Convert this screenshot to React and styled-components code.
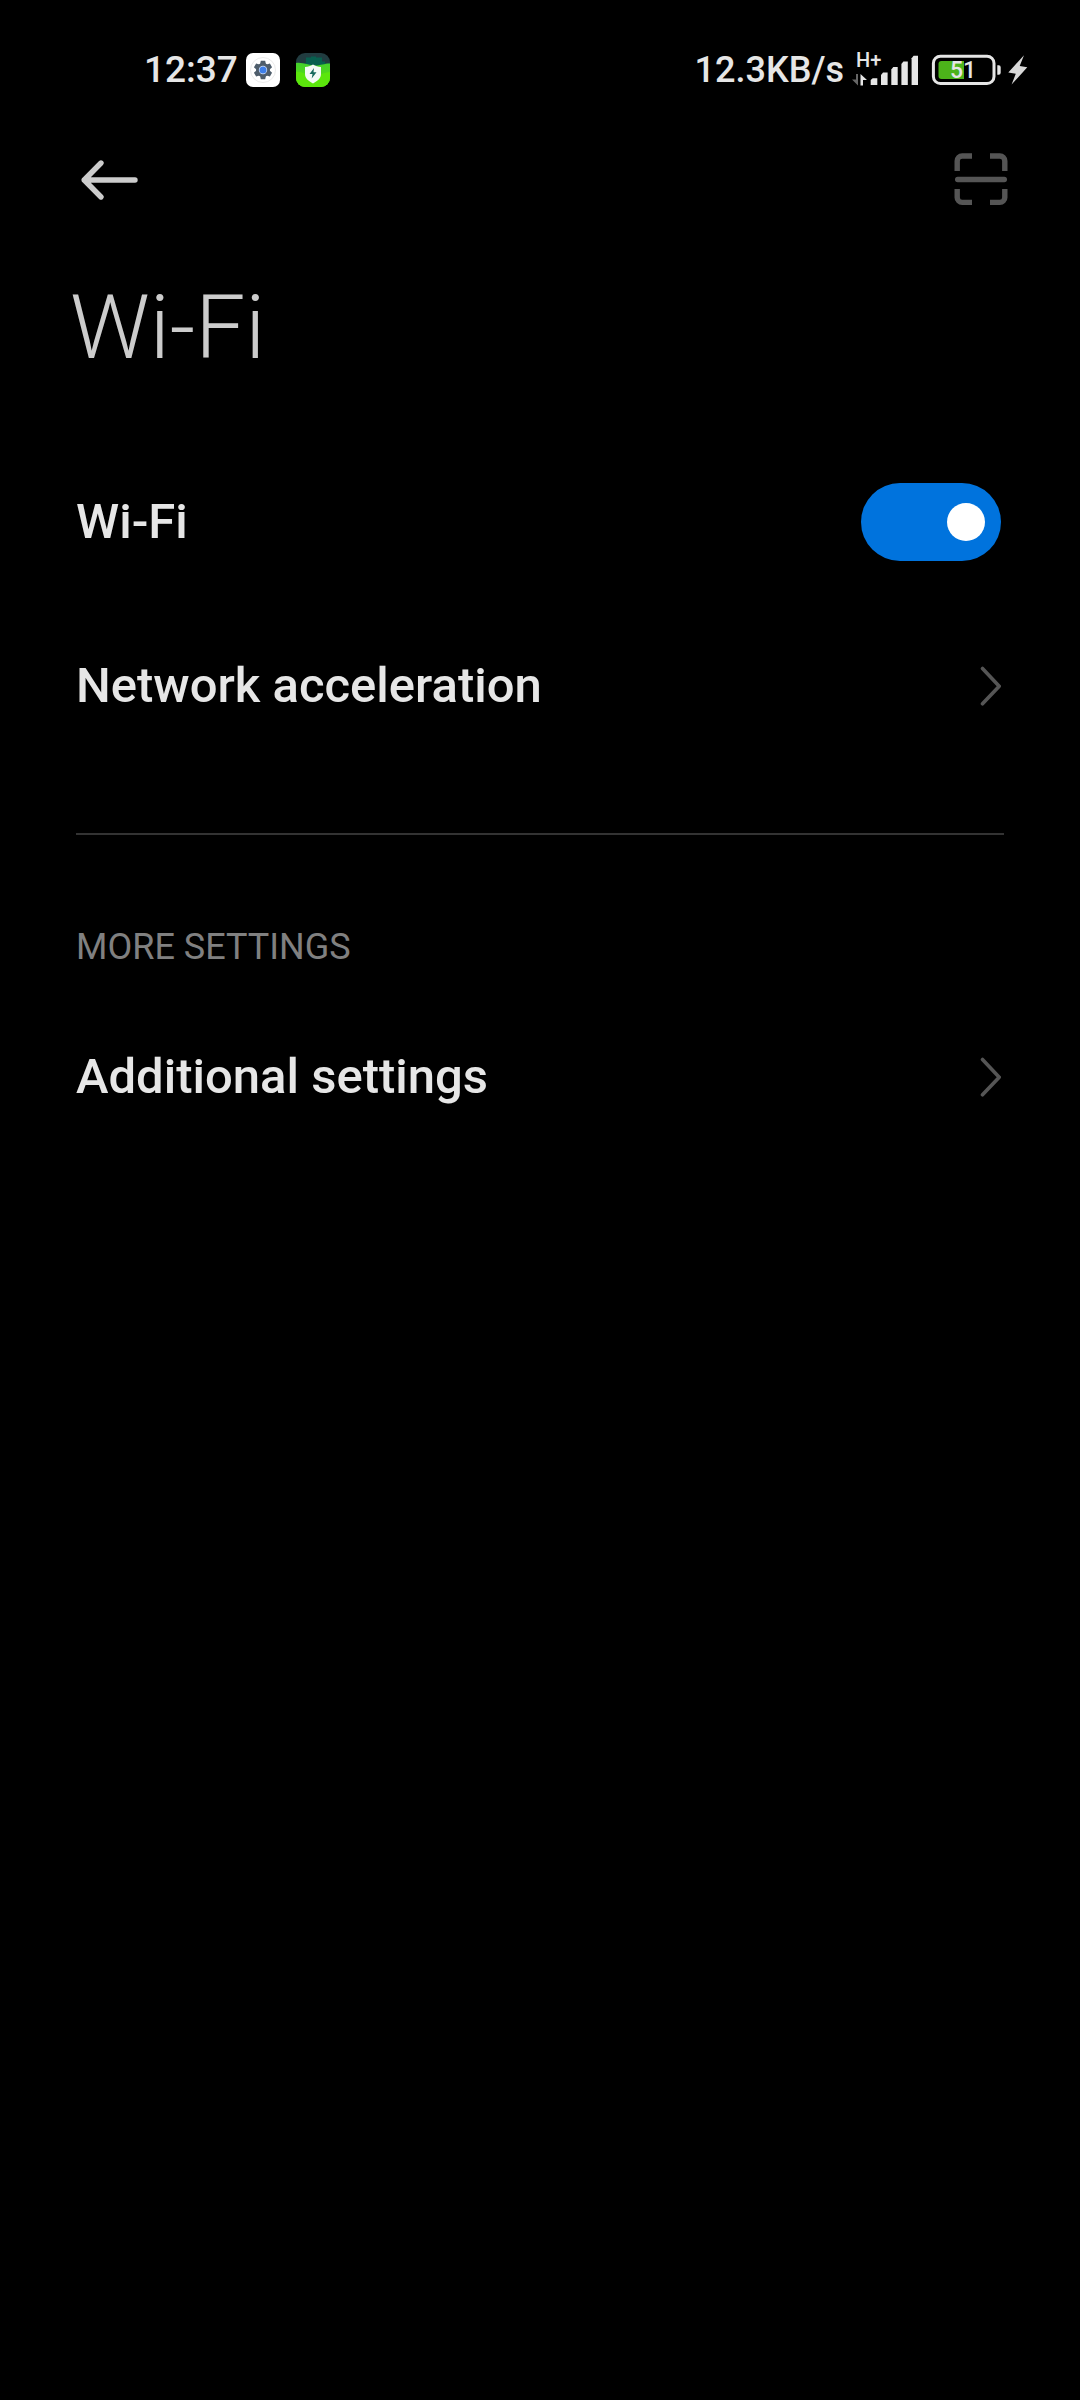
import { useState } from "react";
import styled, { createGlobalStyle } from "styled-components";

const GlobalStyle = createGlobalStyle`
  * {
    box-sizing: border-box;
  }
  body {
    margin: 0;
    background: #000;
    color: #e6e6e6;
    font-family: Roboto, "Noto Sans", sans-serif;
  }
`;

const Screen = styled.div`
  width: 100%;
  min-height: 100vh;
  background: #000;
`;

const StatusBar = styled.div`
  display: flex;
  justify-content: space-between;
  align-items: center;
  height: 140px;
  padding: 0 52px 0 144px;
`;

const StatusGroup = styled.div`
  display: flex;
  align-items: center;
  gap: ${(props) => props.$gap}px;
`;

const StatusText = styled.span`
  font-size: ${(props) => props.$size}px;
  font-weight: 500;
  line-height: 40px;
  white-space: nowrap;
`;

const Icon = styled.svg`
  display: block;
  flex: none;
`;

const Toolbar = styled.header`
  display: flex;
  justify-content: space-between;
  align-items: center;
  height: 80px;
  padding: 0 72px 0 80px;
`;

const IconButton = styled.button`
  display: flex;
  padding: 0;
  border: 0;
  background: none;
  color: ${(props) => props.$color};
  cursor: pointer;
`;

const Title = styled.h1`
  margin: 56px 70px 60px;
  color: #cccccc;
  font-size: 89px;
  font-weight: 300;
  line-height: 104px;
`;

const List = styled.div`
  display: flex;
  flex-direction: column;
`;

const rowStyle = `
  display: flex;
  justify-content: space-between;
  align-items: center;
  height: 164px;
  padding: 0 79px 0 76px;
  color: #e6e6e6;
  font-size: 49px;
  font-weight: 500;
  line-height: 56px;
  text-decoration: none;
  cursor: pointer;
`;

const SwitchRow = styled.label`
  ${rowStyle}
`;

const LinkRow = styled.a`
  ${rowStyle}
`;

const Switch = styled.input`
  appearance: none;
  display: flex;
  align-items: center;
  justify-content: ${(props) => (props.checked ? "flex-end" : "flex-start")};
  width: 140px;
  height: 78px;
  margin: 0;
  padding: 0 16px;
  border-radius: 40px;
  background: ${(props) => (props.checked ? "#0073dd" : "#333333")};
  cursor: pointer;

  &::before {
    content: "";
    width: 38px;
    height: 38px;
    border-radius: 50%;
    background: #fff;
  }
`;

const Divider = styled.hr`
  height: 2px;
  margin: 65px 76px 88px;
  border: 0;
  background: #333333;
`;

const SectionTitle = styled.h2`
  margin: 0 76px 24px;
  color: #808080;
  font-size: 36px;
  font-weight: 400;
  line-height: 48px;
  text-transform: uppercase;
`;

function SettingsAppIcon() {
  return (
    <Icon width="34" height="34" viewBox="0 0 34 34">
      <rect width="34" height="34" rx="7" fill="#fff" />
      <circle cx="17" cy="17" r="12.5" fill="#fff" stroke="#e4e4e4" strokeWidth="0.8" />
      <g fill="#4e5d6b">
        <circle cx="17" cy="17" r="7" />
        {[0, 60, 120, 180, 240, 300].map((a) => (
          <path key={a} d="M14.800 7.800h4.400l0.900 4.200h-6.200z" transform={`rotate(${a} 17 17)`} />
        ))}
      </g>
      <circle cx="17" cy="17" r="4.2" fill="#dbe7fb" />
      <circle cx="17" cy="17" r="3.5" fill="#3f7fe8" />
    </Icon>
  );
}

function SecurityAppIcon() {
  return (
    <Icon width="34" height="34" viewBox="0 0 34 34">
      <defs>
        <clipPath id="security-shape">
          <rect width="34" height="34" rx="9" />
        </clipPath>
        <linearGradient id="security-grass" x1="0" y1="0" x2="0" y2="1">
          <stop offset="0" stopColor="#43cf2c" />
          <stop offset="1" stopColor="#5ee209" />
        </linearGradient>
      </defs>
      <g clipPath="url(#security-shape)">
        <rect width="34" height="34" fill="#213c40" />
        <path d="M10 4.500h5v-1h5v1h6v4h3v2h5v3H6v-3h4z" fill="#075f4e" />
        <path d="M0 10c7-1 12 2.500 19 2.500 6 0 9-2 15-2v23.500H0z" fill="url(#security-grass)" />
        <path d="M0 19c6-1 9 3 15 4 8 1 12-4 19-4v15H0z" fill="#5be60c" />
      </g>
      <path d="M17 11.500c2.500 1.800 5 2.300 8 2.500v7c0 4.500-3.500 7-8 9.500-4.500-2.500-8-5-8-9.500v-7c3-.2 5.500-.7 8-2.500z" fill="#f4faf6" />
      <path d="M18 15l-4.500 6h3l-.8 4.500 4.800-6.200h-3z" fill="#17695d" />
    </Icon>
  );
}

function SignalIcon() {
  return (
    <Icon width="70" height="48" viewBox="0 -4 70 48" fill="#e6e6e6">
      <text x="6" y="17" fontSize="20" fontWeight="500">
        H+
      </text>
      <path d="M8 24v11.500L2 29.500h4V24z" fill="#666666" />
      <path d="M10.500 35.500V24l6.500 6h-4v5.500z" />
      <path d="M20.700 30l2-1.800h4.600V35h-6.600z" />
      <path d="M31 25l2-2.500h4.600V35H31z" />
      <path d="M41.300 19.500l2-2.500h4.400v18h-6.400z" />
      <path d="M51.400 14l2-2.500h4.400V35h-6.400z" />
      <path d="M61.600 8.200l2-2.400H68V35h-6.400z" />
    </Icon>
  );
}

function BatteryIcon() {
  return (
    <Icon width="76" height="40" viewBox="0 0 76 40">
      <rect x="7.400" y="6.200" width="60.600" height="27.400" rx="7" fill="none" stroke="#e6e6e6" strokeWidth="3" />
      <path d="M38 11v18H15.500a3 3 0 0 1-3-3V14a3 3 0 0 1 3-3z" fill="#4cb31a" />
      <path d="M71.300 15.300h1.400a2 2 0 0 1 2 2v5.400a2 2 0 0 1-2 2h-1.400z" fill="#e6e6e6" />
      <text x="24" y="27.500" fontSize="23" fontWeight="500" fill="#e6e6e6">
        51
      </text>
    </Icon>
  );
}

function ChargingIcon() {
  return (
    <Icon width="20" height="40" viewBox="0 0 20 40">
      <path d="M16 5.300L0.300 22.500l7.500 1.200L3.600 34.500 19.300 17.300l-7.600-1.400z" fill="#d8d8d8" />
    </Icon>
  );
}

function BackIcon() {
  return (
    <Icon width="58" height="44" viewBox="0 0 58 44" fill="none" stroke="currentColor" strokeWidth="5.4" strokeLinecap="round" strokeLinejoin="round">
      <path d="M21 5L4.200 22 21 39M4.200 22H55" />
    </Icon>
  );
}

function ScanIcon() {
  return (
    <Icon width="54" height="54" viewBox="0 0 54 54" fill="none" stroke="currentColor" strokeWidth="5.4">
      <path d="M3.200 18V8a5 5 0 0 1 5-5H18M36 3h9.800a5 5 0 0 1 5 5v10M50.800 36v8.400a5 5 0 0 1-5 5H36M18 49.400H8.200a5 5 0 0 1-5-5V36" />
      <path d="M3.700 26.500h46.600" strokeLinecap="round" />
    </Icon>
  );
}

function ChevronIcon() {
  return (
    <Icon width="22" height="40" viewBox="0 0 22 40" fill="none" stroke="#555555" strokeWidth="3.6" strokeLinecap="round" strokeLinejoin="round">
      <path d="M3.500 2.500L20.200 20.200 3.500 37.800" />
    </Icon>
  );
}

function App() {
  const [wifi, setWifi] = useState(true);

  return (
    <Screen>
      <GlobalStyle />
      <StatusBar>
        <StatusGroup $gap={16}>
          <StatusGroup $gap={8}>
            <StatusText $size={37}>12:37</StatusText>
            <SettingsAppIcon />
          </StatusGroup>
          <SecurityAppIcon />
        </StatusGroup>
        <StatusGroup $gap={6}>
          <StatusText $size={36}>12.3KB/s</StatusText>
          <SignalIcon />
          <BatteryIcon />
          <ChargingIcon />
        </StatusGroup>
      </StatusBar>
      <Toolbar>
        <IconButton type="button" aria-label="Back" $color="#cccccc">
          <BackIcon />
        </IconButton>
        <IconButton type="button" aria-label="Scan QR code" $color="#555555">
          <ScanIcon />
        </IconButton>
      </Toolbar>
      <main>
        <Title>Wi-Fi</Title>
        <List>
          <SwitchRow>
            Wi-Fi
            <Switch type="checkbox" role="switch" checked={wifi} onChange={(e) => setWifi(e.target.checked)} />
          </SwitchRow>
          <LinkRow href="#acceleration">
            Network acceleration
            <ChevronIcon />
          </LinkRow>
        </List>
        <Divider />
        <SectionTitle>More settings</SectionTitle>
        <List>
          <LinkRow href="#additional">
            Additional settings
            <ChevronIcon />
          </LinkRow>
        </List>
      </main>
    </Screen>
  );
}

export default App;
